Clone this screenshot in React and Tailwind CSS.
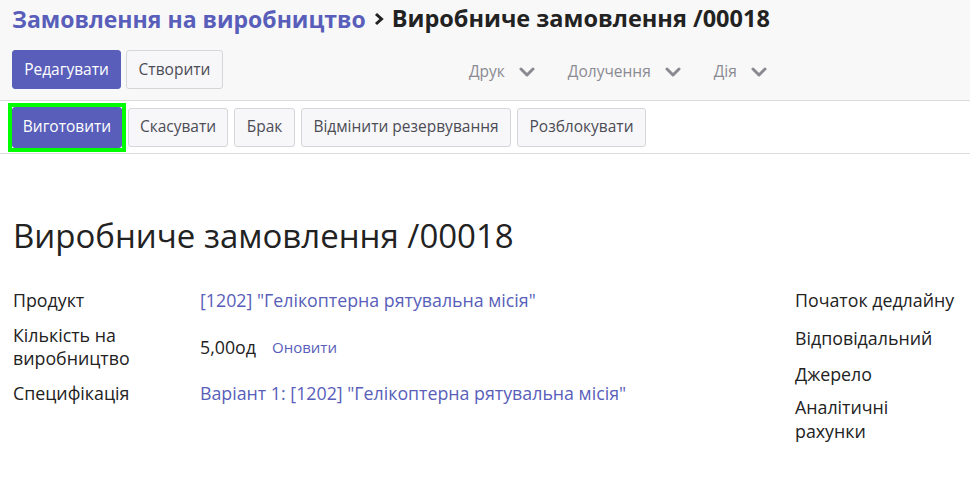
import React from "react";

const Chevron = () => (
  <svg width="16" height="16" viewBox="0 0 16 16" className="ml-[14px] inline-block">
    <path d="M2 5 L8 11 L14 5" fill="none" stroke="#8a8a92" strokeWidth="3" strokeLinecap="round" strokeLinejoin="round" />
  </svg>
);

const Btn = ({ children, primary, className = "" }) => (
  <button
    className={
      "h-[39px] rounded-[3px] border text-[15.5px] leading-none " +
      (primary
        ? "border-[#585eb9] bg-[#585eb9] text-white "
        : "border-[#d6d6da] bg-[#f7f7f9] text-[#4c4c55] ") +
      className
    }
  >
    {children}
  </button>
);

export default function App() {
  return (
    <div className="h-[480px] w-[970px] overflow-hidden bg-white text-[#2b2b2b]" style={{ fontFamily: '"Open Sans", "Noto Sans", sans-serif' }}>
      <div className="bg-[#f8f8f8] border-b border-[#dcdcdc]">
        <div className="flex h-[38px] items-center pl-[12px] font-bold">
          <span className="text-[23px] text-[#585eb9]">Замовлення на виробництво</span>
          <svg width="16" height="16" viewBox="0 0 16 16" className="mx-[5px]">
            <path d="M5 3 L10.5 8 L5 13" fill="none" stroke="#222" strokeWidth="3" />
          </svg>
          <span className="text-[23.5px] text-[#222]">Виробниче замовлення /00018</span>
        </div>
        <div className="flex h-[62px] items-start pt-[12px] pl-[12px]">
          <div className="flex gap-[5px]">
            <Btn primary className="w-[109px]">Редагувати</Btn>
            <Btn className="w-[97px]">Створити</Btn>
          </div>
          <div className="ml-[246px] flex items-center gap-[33px] pt-[10px] text-[15.5px] text-[#8a8a92]">
            <span className="flex items-center">Друк<Chevron /></span>
            <span className="flex items-center">Долучення<Chevron /></span>
            <span className="flex items-center">Дія<Chevron /></span>
          </div>
        </div>
      </div>
      <div className="flex h-[53px] items-center gap-[6px] border-b border-[#dcdcdc] pl-[8px]">
        <div className="border-[4px] border-[#00ff00] p-0">
          <Btn primary className="h-[41px] w-[110px]">Виготовити</Btn>
        </div>
        <Btn className="-ml-[4px] w-[100px]">Скасувати</Btn>
        <Btn className="w-[61px]">Брак</Btn>
        <Btn className="w-[210px]">Відмінити резервування</Btn>
        <Btn className="w-[129px]">Розблокувати</Btn>
      </div>
      <div className="px-[13px] pt-[62px]">
        <h1 className="text-[33px] leading-[40px] text-[#222]">Виробниче замовлення /00018</h1>
        <div className="mt-[33px] flex text-[17.8px] leading-[23px] text-[#222]">
          <div className="w-[782px]">
            <div className="grid grid-cols-[187px_1fr] items-center gap-y-[12px]">
              <div>Продукт</div>
              <div className="text-[#585eb9]">[1202] "Гелікоптерна рятувальна місія"</div>
              <div>Кількість на<br />виробництво</div>
              <div className="flex items-center">
                <span>5,00од</span>
                <span className="ml-[16px] text-[15px] text-[#585eb9]">Оновити</span>
              </div>
              <div>Специфікація</div>
              <div className="text-[#585eb9]">Варіант 1: [1202] "Гелікоптерна рятувальна місія"</div>
            </div>
          </div>
          <div className="flex flex-col">
            <div>Початок дедлайну</div>
            <div className="mt-[15px]">Відповідальний</div>
            <div className="mt-[13px]">Джерело</div>
            <div className="mt-[9px] leading-[24px]">Аналітичні<br />рахунки</div>
          </div>
        </div>
      </div>
    </div>
  );
}
